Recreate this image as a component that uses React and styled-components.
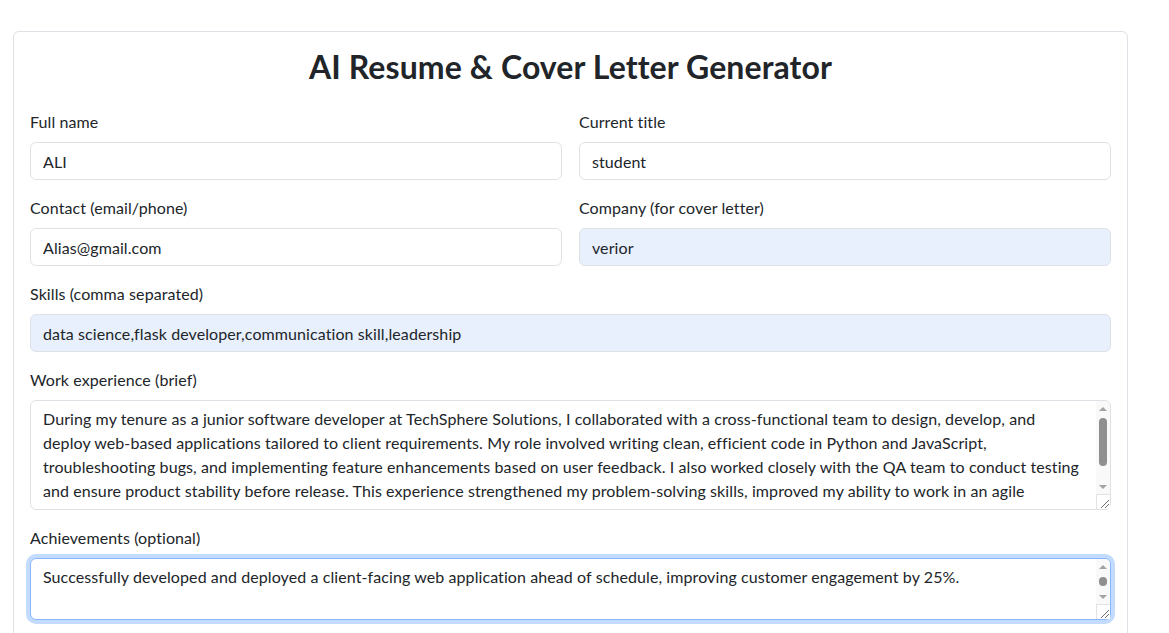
import styled, { createGlobalStyle } from 'styled-components'

const GlobalStyle = createGlobalStyle`
  html, body {
    margin: 0;
    padding: 0;
    background: #fff;
    overflow: hidden;
  }
  body {
    font-family: Lato, "Noto Sans", sans-serif;
    color: #212529;
    letter-spacing: 0.09px;
  }
  * { box-sizing: border-box; }
`

const Page = styled.div`
  height: 633px;
  overflow: hidden;
  padding: 31px 41px 0 13px;
`

const Card = styled.div`
  border: 1px solid #dee2e6;
  border-radius: 6px;
  padding: 16px 16px 80px;
  background: #fff;
`

const Title = styled.h2`
  margin: 0 0 24px;
  text-align: center;
  font-size: 32px;
  line-height: 38px;
  font-weight: 700;
  letter-spacing: 0.1px;
  color: #212529;
`

const Grid = styled.div`
  display: grid;
  grid-template-columns: 1fr 1fr;
  column-gap: 17px;
  row-gap: 16px;
`

const Field = styled.div`
  grid-column: ${p => (p.$wide ? '1 / -1' : 'auto')};
  display: flex;
  flex-direction: column;
`

const Label = styled.label`
  font-size: 16px;
  line-height: 24px;
  margin-bottom: 8px;
`

const Input = styled.input`
  height: 38px;
  padding: 6px 12px;
  font: inherit;
  font-size: 16px;
  line-height: 24px;
  letter-spacing: inherit;
  color: #212529;
  background: ${p => (p.$filled ? '#e8f0fe' : '#fff')};
  border: 1px solid #dee2e6;
  border-radius: 6px;
  outline: none;
`

const AreaWrap = styled.div`
  position: relative;
  display: flex;
  flex-direction: column;
`

const TextArea = styled.textarea`
  padding: 6px 28px 6px 12px;
  font: inherit;
  font-size: 16px;
  line-height: 24px;
  letter-spacing: inherit;
  color: #212529;
  background: #fff;
  border: 1px solid ${p => (p.$focused ? '#86b7fe' : '#dee2e6')};
  border-radius: 6px;
  box-shadow: ${p => (p.$focused ? '0 0 0 4px rgba(13, 110, 253, 0.25)' : 'none')};
  outline: none;
  resize: none;
  overflow: hidden;
`

/* drawn scrollbar that sits over the textarea's right edge */
const ScrollBar = styled.div`
  position: absolute;
  top: 1px;
  right: 1px;
  bottom: 1px;
  width: 14px;
  display: flex;
  flex-direction: column;
  background: #f9f9f9;
  border-radius: 0 5px 5px 0;
  pointer-events: none;
`

const ArrowBtn = styled.div`
  height: 15px;
  flex: none;
  display: flex;
  align-items: center;
  justify-content: center;

  &::before {
    content: '';
    width: 0;
    height: 0;
    border-left: 4px solid transparent;
    border-right: 4px solid transparent;
    ${p => (p.$down ? 'border-top: 4px solid #a3a3a3;' : 'border-bottom: 4px solid #a3a3a3;')}
  }
`

const Track = styled.div`
  flex: 1;
  display: flex;
  flex-direction: column;
  align-items: center;
  justify-content: ${p => (p.$center ? 'center' : 'flex-start')};
  padding-top: ${p => (p.$center ? 0 : 2)}px;
`

const Thumb = styled.div`
  width: 8px;
  height: ${p => p.$size}px;
  border-radius: 4px;
  background: #8f8f8f;
`

const Corner = styled.div`
  height: 15px;
  flex: none;
  background: #fff;
  border-top: 1px solid #e3e3e3;
  border-left: 1px solid #e3e3e3;
  display: flex;
  align-items: flex-end;
  justify-content: flex-end;
`

const Grip = () => (
  <svg width="12" height="12" viewBox="0 0 12 12">
    <line x1="11" y1="3" x2="3" y2="11" stroke="#6f6f6f" strokeWidth="1" />
    <line x1="11" y1="7" x2="7" y2="11" stroke="#6f6f6f" strokeWidth="1" />
  </svg>
)

const Area = ({ rows, value, focused, thumb, center }) => (
  <AreaWrap>
    <TextArea $focused={focused} rows={rows} spellCheck={false} defaultValue={value} />
    <ScrollBar>
      <ArrowBtn />
      <Track $center={center}>
        <Thumb $size={thumb} />
      </Track>
      <ArrowBtn $down />
      <Corner>
        <Grip />
      </Corner>
    </ScrollBar>
  </AreaWrap>
)

const work =
  'During my tenure as a junior software developer at TechSphere Solutions, I collaborated with a cross-functional team to design, develop, and\n' +
  'deploy web-based applications tailored to client requirements. My role involved writing clean, efficient code in Python and JavaScript,\n' +
  'troubleshooting bugs, and implementing feature enhancements based on user feedback. I also worked closely with the QA team to conduct testing\n' +
  'and ensure product stability before release. This experience strengthened my problem-solving skills, improved my ability to work in an agile\n' +
  'environment, and deepened my understanding of the full software development lifecycle.'

const achievements =
  'Successfully developed and deployed a client-facing web application ahead of schedule, improving customer engagement by 25%.'

const App = () => (
  <Page>
    <GlobalStyle />
    <Card>
      <Title>AI Resume &amp; Cover Letter Generator</Title>
      <Grid>
        <Field>
          <Label>Full name</Label>
          <Input defaultValue="ALI" />
        </Field>
        <Field>
          <Label>Current title</Label>
          <Input defaultValue="student" />
        </Field>
        <Field>
          <Label>Contact (email/phone)</Label>
          <Input defaultValue="Alias@gmail.com" />
        </Field>
        <Field>
          <Label>Company (for cover letter)</Label>
          <Input $filled defaultValue="verior" />
        </Field>
        <Field $wide>
          <Label>Skills (comma separated)</Label>
          <Input $filled defaultValue="data science,flask developer,communication skill,leadership" />
        </Field>
        <Field $wide>
          <Label>Work experience (brief)</Label>
          <Area rows={4} value={work} thumb={48} />
        </Field>
        <Field $wide>
          <Label>Achievements (optional)</Label>
          <Area rows={2} value={achievements} focused thumb={9} center />
        </Field>
      </Grid>
    </Card>
  </Page>
)

export default App
